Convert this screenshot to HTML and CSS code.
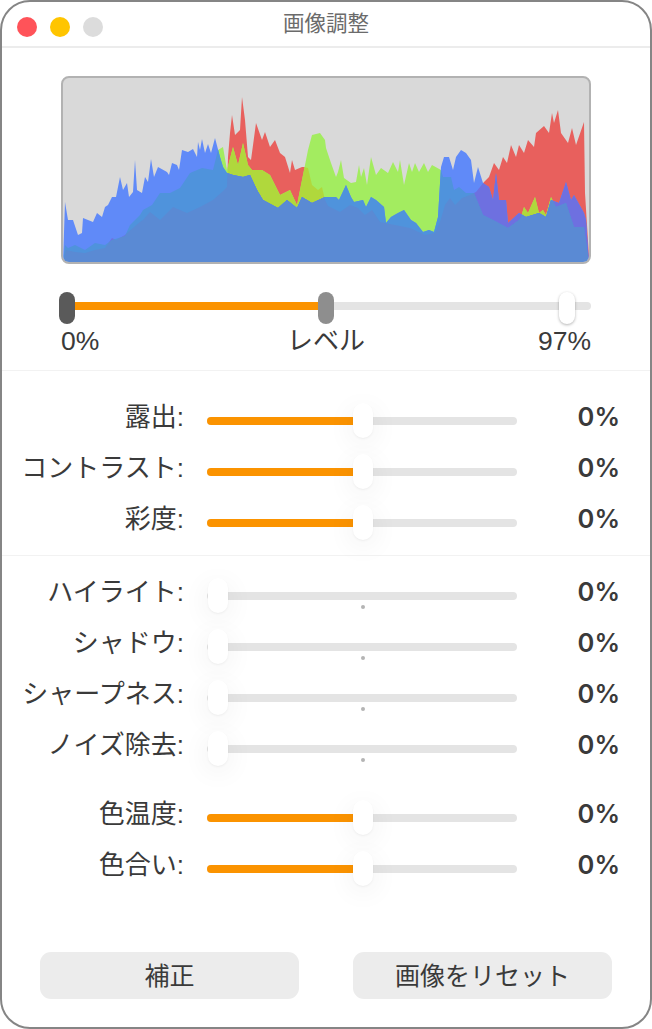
FILE: index.html
```html
<!DOCTYPE html>
<html lang="ja">
<head>
    <meta charset="UTF-8">
    <meta name="viewport" content="width=device-width, initial-scale=1.0">
    <title>画像調整</title>
    <link rel="stylesheet" href="styles.css">
</head>
<body>

    <div class="window">
        <div class="titlebar">
            <div class="lights">
                <span class="light red"></span>
                <span class="light yellow"></span>
                <span class="light grey"></span>
            </div>
            <div class="title">画像調整</div>
            <div></div>
        </div>

        <div class="levels">
            <div class="histogram">
                <svg viewBox="63 78 526 184" preserveAspectRatio="none">
                    <defs>
                        <polygon id="redShape" points="63,263 66,250 75,252 85,253 95,250 105,248 112,238 116,240 125,235 133,228 140,222 143,220 150,212 160,220 173,207 187,213 200,207 213,200 222,192 227,187 228,157 230,133 232,115 235,135 240,130 242,97 245,120 248,157 251,160 256,123 262,140 265,132 270,147 275,140 280,153 285,157 290,173 292,160 295,170 302,167 304,167 308,168 312,185 318,190 322,187 325,200 328,206 340,212 350,205 358,208 365,215 372,210 380,222 395,225 410,228 425,235 435,233 440,222 445,205 450,198 455,205 462,198 470,195 476,192 484,182 489,177 494,163 499,170 503,157 507,163 511,145 516,157 519,145 524,153 528,140 534,147 536,133 544,126 549,133 552,113 554,123 558,110 561,133 568,143 572,128 576,145 584,122 585,193 589,257 589,263"/>
                        <polygon id="greenShape" points="63,263 65,245 68,248 75,245 85,250 95,243 105,245 112,240 125,236 130,225 140,215 143,210 152,205 160,193 170,193 180,188 190,173 202,168 213,170 218,150 223,147 227,170 233,147 238,165 243,143 248,165 252,170 262,170 270,175 280,195 290,190 297,205 303,175 308,150 312,135 320,133 325,140 326,148 331,163 336,177 338,172 341,160 344,178 351,183 356,182 359,165 361,177 364,168 367,185 371,157 376,175 381,168 388,173 393,162 398,172 400,160 404,185 409,163 412,172 415,163 419,172 424,163 428,172 432,165 441,170 443,177 451,177 454,190 459,187 466,193 474,193 483,215 493,220 508,228 519,220 521,217 524,207 528,213 535,197 539,213 543,210 546,215 551,197 556,207 566,203 574,227 584,227 589,263"/>
                        <polygon id="blueShape" points="63,263 65,202 68,220 73,220 78,235 82,233 83,218 93,222 97,213 102,217 105,207 108,205 112,197 116,197 120,177 123,190 127,183 129,197 133,192 135,160 137,190 142,193 145,177 148,182 151,159 154,177 158,167 167,172 169,175 172,163 177,165 179,170 182,150 188,152 193,149 197,157 198,142 200,150 202,139 205,153 208,144 211,153 215,138 220,157 223,167 227,173 233,175 243,177 250,175 257,190 263,200 278,208 287,200 297,208 302,197 312,203 325,197 336,197 339,200 346,185 351,197 354,202 363,200 366,207 371,197 376,200 384,207 386,223 391,217 398,213 404,210 411,220 416,223 423,232 429,230 434,232 438,217 441,167 444,157 449,157 453,170 456,157 461,150 466,153 471,160 474,183 478,167 483,183 489,187 493,200 496,173 499,200 506,200 508,223 519,213 526,217 539,213 546,217 551,200 559,203 566,182 571,200 574,195 584,213 586,220 589,263"/>
                        <clipPath id="redClip"><use href="#redShape"/></clipPath>
                        <clipPath id="greenClip"><use href="#greenShape"/></clipPath>
                        <clipPath id="blueClip"><use href="#blueShape"/></clipPath>
                    </defs>
                    <use href="#redShape" fill="#e8605d"/>
                    <use href="#greenShape" fill="#a3ec60"/>
                    <use href="#greenShape" fill="#b0d83c" clip-path="url(#redClip)"/>
                    <use href="#blueShape" fill="#608af8"/>
                    <use href="#blueShape" fill="#6e70e0" clip-path="url(#redClip)"/>
                    <use href="#blueShape" fill="#4f93dc" clip-path="url(#greenClip)"/>
                    <g clip-path="url(#redClip)">
                        <use href="#blueShape" fill="#5a8ad4" clip-path="url(#greenClip)"/>
                    </g>
                </svg>
            </div>

            <div class="track level-track">
                <div class="fill" style="width: 258px"></div>
                <span class="level-thumb dark" style="left: -2px"></span>
                <span class="level-thumb mid" style="left: 257px"></span>
                <span class="level-thumb light-thumb" style="left: 498px"></span>
            </div>
            <div class="level-labels">
                <span>0%</span>
                <span class="level-name">レベル</span>
                <span>97%</span>
            </div>
        </div>

        <div class="group group-basic">
            <div class="row">
                <label>露出:</label>
                <div class="track"><div class="fill half"></div><span class="thumb center"></span></div>
                <span class="value">0%</span>
            </div>
            <div class="row">
                <label>コントラスト:</label>
                <div class="track"><div class="fill half"></div><span class="thumb center"></span></div>
                <span class="value">0%</span>
            </div>
            <div class="row">
                <label>彩度:</label>
                <div class="track"><div class="fill half"></div><span class="thumb center"></span></div>
                <span class="value">0%</span>
            </div>
        </div>

        <div class="group group-detail">
            <div class="row">
                <label>ハイライト:</label>
                <div class="track"><span class="thumb start"></span><span class="tick"></span></div>
                <span class="value">0%</span>
            </div>
            <div class="row">
                <label>シャドウ:</label>
                <div class="track"><span class="thumb start"></span><span class="tick"></span></div>
                <span class="value">0%</span>
            </div>
            <div class="row">
                <label>シャープネス:</label>
                <div class="track"><span class="thumb start"></span><span class="tick"></span></div>
                <span class="value">0%</span>
            </div>
            <div class="row">
                <label>ノイズ除去:</label>
                <div class="track"><span class="thumb start"></span><span class="tick"></span></div>
                <span class="value">0%</span>
            </div>

            <div class="row row-gap">
                <label>色温度:</label>
                <div class="track"><div class="fill half"></div><span class="thumb center"></span></div>
                <span class="value">0%</span>
            </div>
            <div class="row">
                <label>色合い:</label>
                <div class="track"><div class="fill half"></div><span class="thumb center"></span></div>
                <span class="value">0%</span>
            </div>
        </div>

        <div class="buttons">
            <button class="button">補正</button>
            <button class="button">画像をリセット</button>
        </div>
    </div>

</body>
</html>
```

FILE: styles.css
```css
* {
    box-sizing: border-box;
}

body {
    margin: 0;
    background-color: #fff;
    font-family: "Liberation Sans", "Noto Sans CJK JP", sans-serif;
    color: #3a3a3a;
}

.window {
    display: flex;
    flex-direction: column;
    height: 1029px;
    border: 2px solid #858585;
    border-radius: 30px;
    overflow: hidden;
    background-color: #fff;
}

.titlebar {
    display: grid;
    grid-template-columns: 1fr auto 1fr;
    align-items: center;
    height: 46px;
    flex-shrink: 0;
    border-bottom: 2px solid #ececec;
}

.lights {
    display: flex;
    gap: 13px;
    padding-left: 15px;
    padding-top: 6px;
}

.light {
    width: 20px;
    height: 20px;
    border-radius: 50%;
}

.light.red {
    background-color: #ff5359;
}

.light.yellow {
    background-color: #ffc500;
}

.light.grey {
    background-color: #dcdcdc;
}

.title {
    font-size: 21.5px;
    line-height: 44px;
    color: #6b6b6b;
}

.levels {
    padding: 28px 59px 14px;
    border-bottom: 1px solid #f2f2f2;
}

.histogram {
    height: 188px;
    border: 2px solid #b2b2b2;
    border-radius: 8px;
    background-color: #d9d9d9;
    overflow: hidden;
}

.histogram svg {
    display: block;
    width: 100%;
    height: 100%;
    filter: blur(0.4px);
}

.track {
    position: relative;
    height: 8px;
    border-radius: 4px;
    background-color: #e4e4e4;
}

.fill {
    height: 100%;
    border-radius: 4px 0 0 4px;
    background-color: #fb9300;
}

.fill.half {
    width: 150px;
}

.level-track {
    margin-top: 38px;
}

.level-thumb {
    position: absolute;
    top: -10px;
    width: 16px;
    height: 32px;
    border-radius: 8px;
}

.level-thumb.dark {
    background-color: #5a5a5a;
}

.level-thumb.mid {
    background-color: #8e8e8e;
}

.level-thumb.light-thumb {
    background-color: #fff;
    box-shadow: 0 1px 3px rgba(0, 0, 0, 0.3);
}

.level-labels {
    display: grid;
    grid-template-columns: 1fr auto 1fr;
    margin-top: 16px;
    font-size: 26.5px;
    line-height: 30px;
}

.level-labels span:last-child {
    text-align: right;
}

.level-name {
    font-size: 26px;
}

.group {
    display: flex;
    flex-direction: column;
}

.group-basic {
    padding-top: 24px;
    padding-bottom: 7px;
    border-bottom: 1px solid #f2f2f2;
}

.group-detail {
    padding-top: 14px;
}

.row {
    display: grid;
    grid-template-columns: 182px 310px 80px;
    column-gap: 23px;
    align-items: center;
    height: 51px;
}

.row-gap {
    margin-top: 18px;
}

.row label {
    font-size: 26px;
    line-height: 30px;
    text-align: right;
    white-space: nowrap;
    position: relative;
    top: -4px;
}

.value {
    font-family: Inter, "Liberation Sans", sans-serif;
    font-size: 25.5px;
    font-weight: 600;
    line-height: 30px;
    text-align: right;
    position: relative;
    top: -4px;
}

.thumb {
    position: absolute;
    top: -14px;
    width: 20px;
    height: 35px;
    border-radius: 10px;
    background-color: #fff;
    box-shadow: 0 6px 28px rgba(0, 0, 0, 0.07), 0 1px 2px rgba(0, 0, 0, 0.05);
}

.thumb.center {
    left: 146px;
}

.thumb.start {
    left: 1px;
}

.tick {
    position: absolute;
    left: 154px;
    top: 13px;
    width: 4px;
    height: 4px;
    border-radius: 50%;
    background-color: #b4b4b4;
}

.buttons {
    display: flex;
    justify-content: space-between;
    margin-top: auto;
    padding: 0 38px 28px;
}

.button {
    width: 259px;
    height: 47px;
    border: none;
    border-radius: 11px;
    background-color: #ececec;
    color: #3a3a3a;
    font-family: inherit;
    font-size: 25px;
    padding: 0 0 3px;
}
```
